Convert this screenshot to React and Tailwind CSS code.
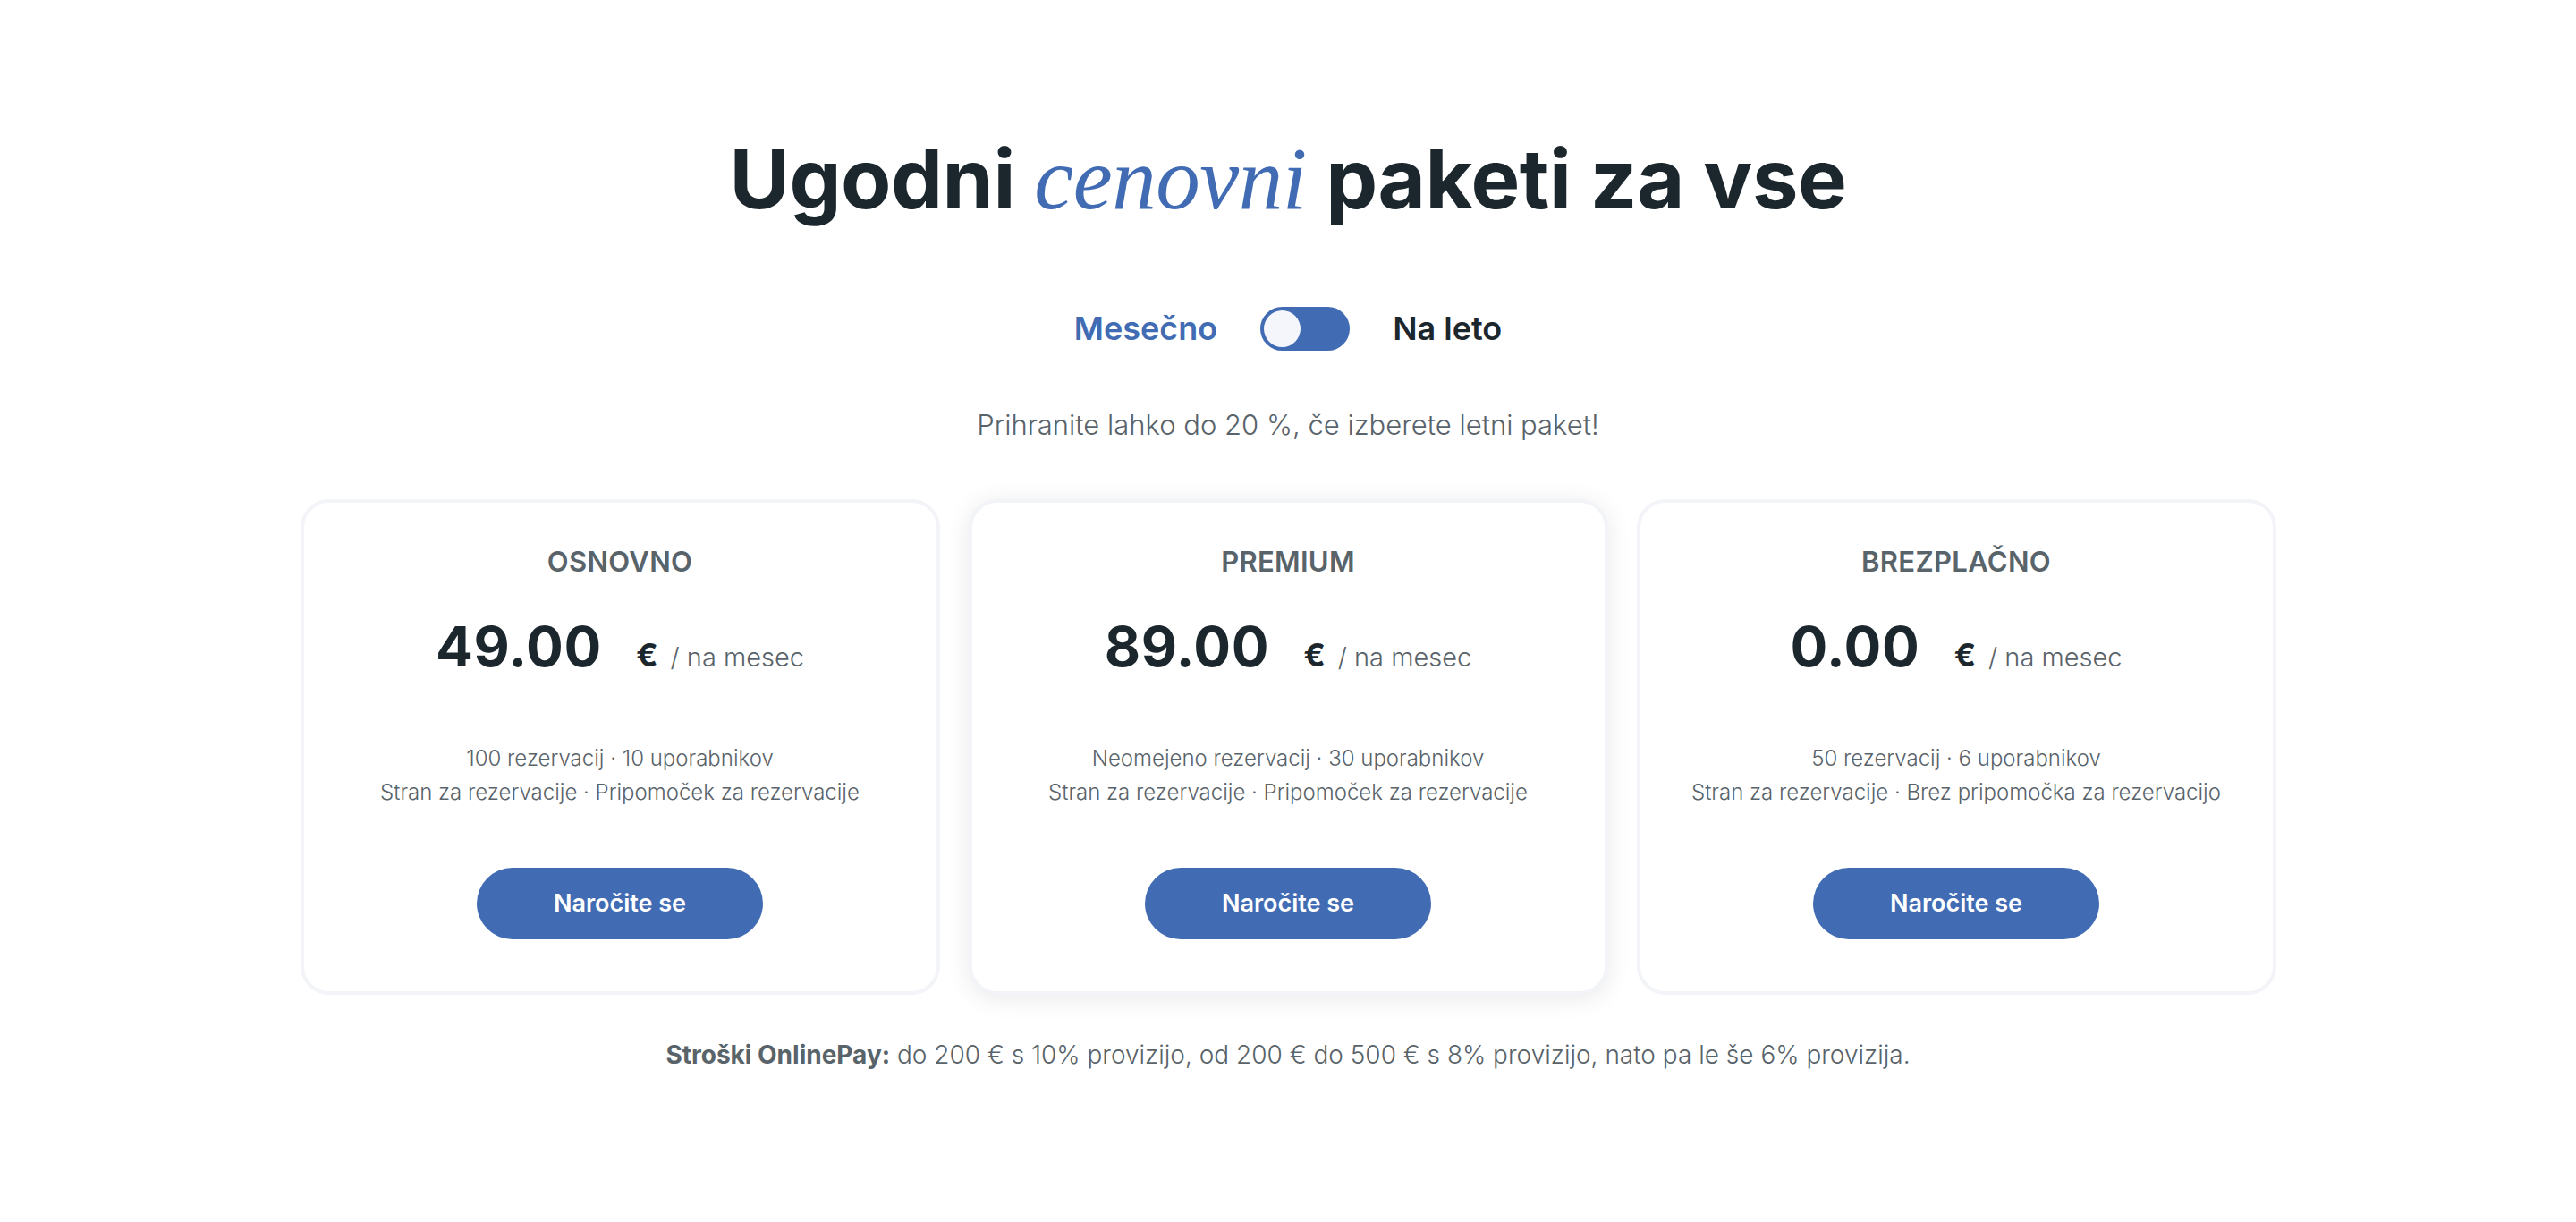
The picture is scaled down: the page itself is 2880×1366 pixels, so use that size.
import { useState } from 'react';

const plans = [
  {
    name: 'OSNOVNO',
    price: '49.00',
    lines: ['100 rezervacij · 10 uporabnikov', 'Stran za rezervacije · Pripomoček za rezervacije'],
  },
  {
    name: 'PREMIUM',
    price: '89.00',
    lines: ['Neomejeno rezervacij · 30 uporabnikov', 'Stran za rezervacije · Pripomoček za rezervacije'],
    featured: true,
  },
  {
    name: 'BREZPLAČNO',
    price: '0.00',
    lines: ['50 rezervacij · 6 uporabnikov', 'Stran za rezervacije · Brez pripomočka za rezervacijo'],
  },
];

const PlanCard = ({ plan }) => (
  <div
    className={
      'flex h-[554px] flex-col items-center rounded-[32px] border-4 border-[#f2f4f8] bg-white pt-[43px] ' +
      (plan.featured ? 'shadow-[0_4px_28px_rgba(0,0,0,0.09)]' : '')
    }
  >
    <h3 className="text-[31px] font-semibold tracking-[0.01em] text-[#59636a]">{plan.name}</h3>
    <div className="mt-[25px] flex items-baseline">
      <span className="text-[62px] font-bold tracking-[0.01em] text-[#1c272d]">{plan.price}</span>
      <span className="ml-[38px] text-[36px] font-bold text-[#1c272d]">€</span>
      <span className="ml-[14px] text-[29px] font-light text-[#59636a]">/ na mesec</span>
    </div>
    <div className="mt-[60px] flex flex-col items-center text-[24px] font-light leading-[38px] text-[#59636a]">
      {plan.lines.map((l) => (
        <p key={l}>{l}</p>
      ))}
    </div>
    <button className="mt-[65px] h-[80px] w-[320px] rounded-full bg-[#416cb4] text-[27px] font-semibold text-white">
      Naročite se
    </button>
  </div>
);

export default function App() {
  const [yearly, setYearly] = useState(false);

  return (
    <div className="min-h-screen bg-white font-['Inter',sans-serif]">
      <div className="mx-auto flex w-[2209px] flex-col items-center pt-[140px]">
        <h1 className="text-[92px] font-bold leading-[120px] tracking-[-0.005em] text-[#1c272d]">
          Ugodni{' '}
          <span className="font-['Liberation_Serif',serif] text-[99px] font-normal italic text-[#416cb4]">
            cenovni
          </span>{' '}
          paketi za vse
        </h1>

        <div className="mt-[80px] flex items-center gap-[48px]">
          <span className={'text-[36px] font-semibold ' + (yearly ? 'text-[#1c272d]' : 'text-[#416cb4]')}>
            Mesečno
          </span>
          <button
            onClick={() => setYearly(!yearly)}
            className={
              'flex h-[49px] w-[100px] items-center rounded-full bg-[#416cb4] px-[4px] ' +
              (yearly ? 'justify-end' : 'justify-start')
            }
          >
            <span className="block h-[41px] w-[41px] rounded-full bg-[#f4f6fb]"></span>
          </button>
          <span className={'text-[36px] font-semibold ' + (yearly ? 'text-[#416cb4]' : 'text-[#1c272d]')}>
            Na leto
          </span>
        </div>

        <p className="mt-[58px] text-[31px] font-light text-[#59636a]">
          Prihranite lahko do 20 %, če izberete letni paket!
        </p>

        <div className="mt-[59px] grid w-full grid-cols-3 gap-[32px]">
          {plans.map((p) => (
            <PlanCard key={p.name} plan={p} />
          ))}
        </div>

        <p className="mt-[46px] text-[28px] font-light text-[#59636a]">
          <span className="font-bold">Stroški OnlinePay:</span> do 200 € s 10% provizijo, od 200 € do 500 € s 8%
          provizijo, nato pa le še 6% provizija.
        </p>
      </div>
    </div>
  );
}
